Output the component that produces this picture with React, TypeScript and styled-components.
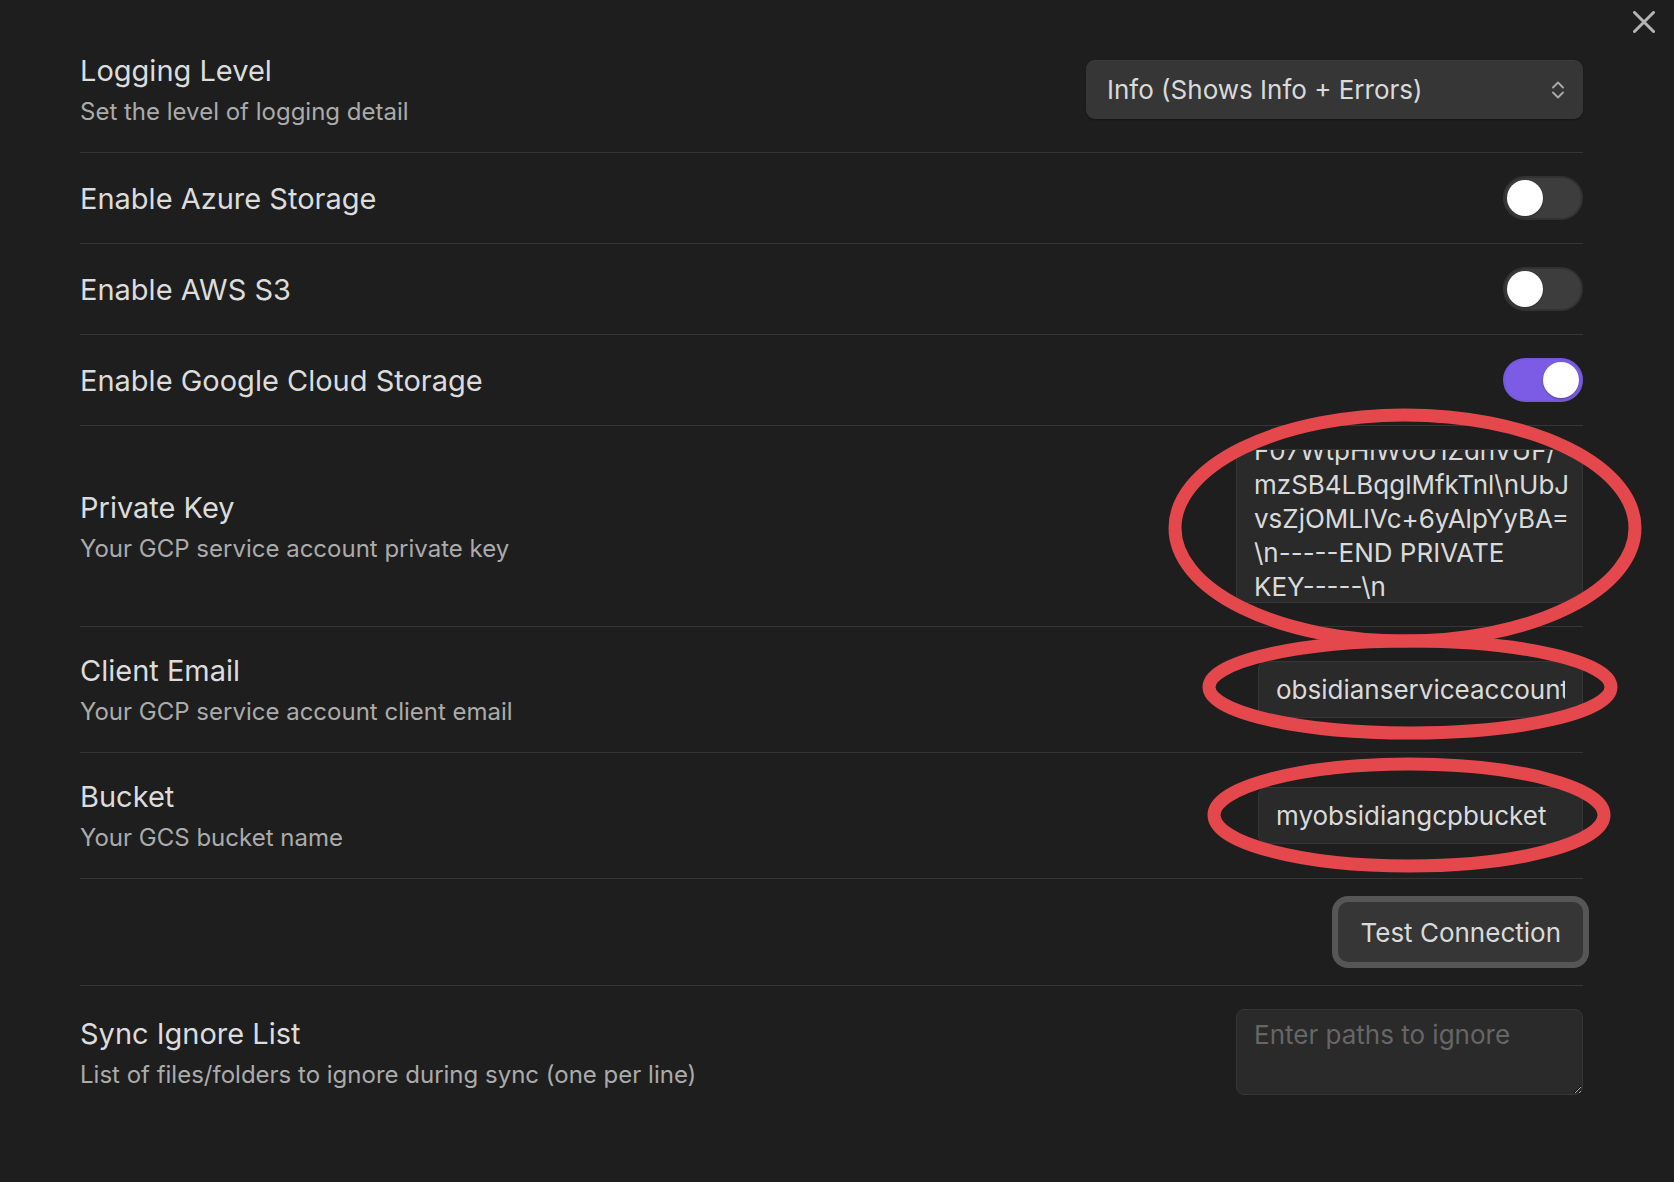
import { useEffect, useRef, useState } from 'react'
import styled, { createGlobalStyle } from 'styled-components'

const GlobalStyle = createGlobalStyle`
  html, body {
    margin: 0;
    padding: 0;
    background: #1e1e1e;
  }
  body {
    font-family: Inter, "Noto Sans", "Liberation Sans", sans-serif;
    color: #dadada;
  }
  * {
    box-sizing: border-box;
  }
`

const Page = styled.div`
  position: relative;
  min-height: 100vh;
  padding: 27px 91px 40px 80px;
`

const SettingList = styled.div`
  display: flex;
  flex-direction: column;
`

const CloseButton = styled.button`
  position: absolute;
  top: 9px;
  right: 17px;
  width: 26px;
  height: 26px;
  padding: 0;
  border: none;
  background: transparent;
  color: #b4b4b4;
  display: flex;
  align-items: center;
  justify-content: center;
`

const SettingItem = styled.div`
  display: flex;
  align-items: center;
  gap: 24px;
  padding: 23px 0;
  border-top: 1px solid #353535;

  &:first-child {
    border-top: none;
  }
`

const Info = styled.div`
  flex: 1;
  min-width: 0;
`

const Name = styled.div`
  padding-top: 2px;
  font-size: 29px;
  line-height: 38px;
  color: #dcdcdc;
`

const Desc = styled.div`
  margin-top: 5px;
  font-size: 24px;
  line-height: 34px;
  color: #ababab;
`

const Control = styled.div`
  flex-shrink: 0;
  display: flex;
  justify-content: flex-end;
  align-items: center;
`

const SelectBox = styled.div`
  position: relative;
  width: 497px;
  height: 59px;
  padding: 0 50px 0 21px;
  display: flex;
  align-items: center;
  border-radius: 9px;
  background: #363636;
  box-shadow: 0 1px 2px rgba(0, 0, 0, 0.35), inset 0 1px 0 rgba(255, 255, 255, 0.04);
  font-size: 26px;
  color: #dadada;
`

const SelectArrows = styled.svg`
  position: absolute;
  right: 19px;
  top: 50%;
  transform: translateY(-50%);
`

const Track = styled.button<{ $on: boolean }>`
  position: relative;
  width: 80px;
  height: 44px;
  padding: 0;
  border: none;
  border-radius: 22px;
  background: ${p => (p.$on ? '#7c5ce4' : '#3d3d3d')};
  box-shadow: inset 0 0 0 2px ${p => (p.$on ? 'rgba(0,0,0,0.04)' : 'rgba(0,0,0,0.18)')};
  cursor: pointer;
`

const Knob = styled.span<{ $on: boolean }>`
  position: absolute;
  top: 4px;
  left: ${p => (p.$on ? '40px' : '4px')};
  width: 36px;
  height: 36px;
  border-radius: 50%;
  background: #ffffff;
  box-shadow: 0 1px 2px rgba(0, 0, 0, 0.3);
`

const TextInput = styled.input`
  width: 325px;
  height: 57px;
  padding: 0 17px;
  border: 1px solid #363636;
  border-radius: 8px;
  background: #2a2a2a;
  color: #dadada;
  font-family: inherit;
  font-size: 26px;
  outline: none;
`

const TextArea = styled.textarea<{ $h: number }>`
  display: block;
  width: 347px;
  height: ${p => p.$h}px;
  padding: 8px 17px;
  border: 1px solid #363636;
  border-radius: 8px;
  background: #2a2a2a;
  color: #dadada;
  color-scheme: dark;
  font-family: inherit;
  font-size: 26px;
  line-height: 34px;
  outline: none;
  resize: both;
  overflow: hidden;
  white-space: pre;

  &::placeholder {
    color: #666666;
  }
`

const ActionButton = styled.button`
  height: 60px;
  padding: 0 22px;
  border: none;
  border-radius: 10px;
  background: #363636;
  color: #dadada;
  font-family: inherit;
  font-size: 26px;
  box-shadow: 0 0 0 6px #565656;
  cursor: pointer;
`

const Annotations = styled.svg`
  position: absolute;
  top: 0;
  left: 0;
  pointer-events: none;
`

const keyLines = [
  'MIIEvAIBADANBgkqhkiG9w',
  'BAQEFAASCBKYwggSiAgE',
  'AAoIBAQC7tRk3x9qL0m',
  'Zr8pUvN2e4dHcWqYp0s',
  'jQ1nKx7Bf5Gt2LwVh9a',
  'F07WtpHiW0U1ZdnVUF/',
  'mzSB4LBqglMfkTnl\\nUbJ',
  'vsZjOMLIVc+6yAlpYyBA=',
  '\\n-----END PRIVATE',
  'KEY-----\\n',
]

const Toggle = ({ initial }: { initial: boolean }) => {
  const [on, setOn] = useState(initial)
  return (
    <Track $on={on} onClick={() => setOn(!on)}>
      <Knob $on={on} />
    </Track>
  )
}

const Setting = ({ name, desc, children }: { name?: string; desc?: string; children: React.ReactNode }) => (
  <SettingItem>
    <Info>
      {name && <Name>{name}</Name>}
      {desc && <Desc>{desc}</Desc>}
    </Info>
    <Control>{children}</Control>
  </SettingItem>
)

const App = (): JSX.Element => {
  const keyRef = useRef<HTMLTextAreaElement>(null)

  useEffect(() => {
    if (keyRef.current) keyRef.current.scrollTop = 34 * (keyLines.length - 1) - 112
  }, [])

  return (
    <>
      <GlobalStyle />
      <Page>
        <SettingList>
          <Setting name="Logging Level" desc="Set the level of logging detail">
            <SelectBox>
              Info (Shows Info + Errors)
              <SelectArrows width="12" height="19" viewBox="0 0 12 19">
                <path d="M1 7 L6 2 L11 7 M1 12 L6 17 L11 12" fill="none" stroke="#ababab" strokeWidth="1.8" strokeLinecap="round" strokeLinejoin="round" />
              </SelectArrows>
            </SelectBox>
          </Setting>

          <Setting name="Enable Azure Storage">
            <Toggle initial={false} />
          </Setting>
          <Setting name="Enable AWS S3">
            <Toggle initial={false} />
          </Setting>
          <Setting name="Enable Google Cloud Storage">
            <Toggle initial={true} />
          </Setting>

          <Setting name="Private Key" desc="Your GCP service account private key">
            <TextArea ref={keyRef} $h={154} wrap="off" spellCheck={false} defaultValue={keyLines.join('\n')} />
          </Setting>

          <Setting name="Client Email" desc="Your GCP service account client email">
            <TextInput spellCheck={false} defaultValue="obsidianserviceaccount@obsidian-sync-project.iam.gserviceaccount.com" />
          </Setting>

          <Setting name="Bucket" desc="Your GCS bucket name">
            <TextInput spellCheck={false} defaultValue="myobsidiangcpbucket" />
          </Setting>

          <Setting>
            <ActionButton>Test Connection</ActionButton>
          </Setting>

          <Setting name="Sync Ignore List" desc="List of files/folders to ignore during sync (one per line)">
            <TextArea $h={86} placeholder="Enter paths to ignore" />
          </Setting>
        </SettingList>

        <CloseButton aria-label="Close">
          <svg width="22" height="22" viewBox="0 0 22 22">
            <path d="M1.5 1.5 L20.5 20.5 M20.5 1.5 L1.5 20.5" stroke="currentColor" strokeWidth="3" strokeLinecap="round" />
          </svg>
        </CloseButton>

        <Annotations width="1674" height="1182" viewBox="0 0 1674 1182">
          <g fill="none" stroke="#e4474c" strokeWidth="13">
            <ellipse cx="1405" cy="528" rx="230" ry="113" />
            <ellipse cx="1410" cy="687" rx="201" ry="46" />
            <ellipse cx="1409" cy="815" rx="195" ry="51" />
          </g>
        </Annotations>
      </Page>
    </>
  )
}

export default App
